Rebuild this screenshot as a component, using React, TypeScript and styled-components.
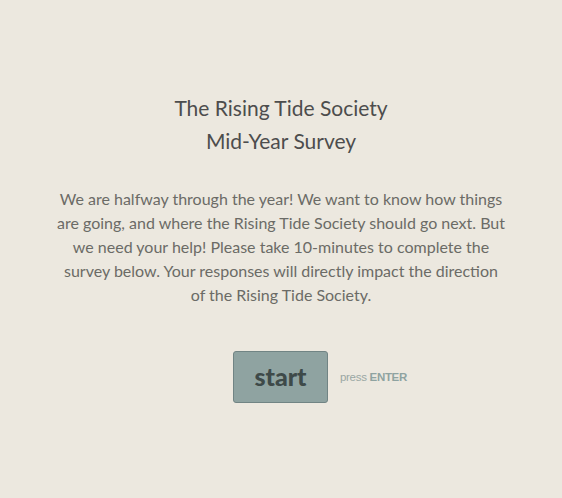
import React from "react";
import styled, { createGlobalStyle } from "styled-components";

const Global = createGlobalStyle`
  html, body { margin: 0; padding: 0; background: #ece8df; }
  body { font-family: Lato, "Open Sans", sans-serif; }
`;

const Page = styled.div`
  width: 562px;
  height: 498px;
  background: #ece8df;
  display: flex;
  flex-direction: column;
  align-items: center;
  padding-top: 91px;
  box-sizing: border-box;
`;

const Title = styled.h1`
  margin: 0;
  font-family: Lato, sans-serif;
  font-weight: 400;
  font-size: 21px;
  line-height: 33px;
  color: #4d4d4d;
  text-align: center;
`;

const Body = styled.p`
  margin: 30px 0 0;
  width: 451px;
  font-family: Lato, sans-serif;
  font-size: 16px;
  line-height: 24px;
  color: #6b6b66;
  text-align: center;
`;

const Actions = styled.div`
  margin-top: 44px;
  display: flex;
  align-items: center;
  gap: 12px;
  margin-left: 78px;
`;

const StartButton = styled.button`
  width: 95px;
  height: 52px;
  background: #8fa3a1;
  border: 1px solid #718484;
  border-radius: 3px;
  font-family: Lato, sans-serif;
  font-weight: 900;
  font-size: 25px;
  color: #3e4a49;
  padding: 0 0 2px;
  cursor: pointer;
`;

const Hint = styled.span`
  font-family: "Liberation Sans", Arial, sans-serif;
  font-size: 11.5px;
  color: #9aa7a4;
  letter-spacing: -0.3px;
  b { font-weight: 700; color: #8fa3a1; }
`;

export default function App() {
  return (
    <Page>
      <Global />
      <Title>
        The Rising Tide Society
        <br />
        Mid-Year Survey
      </Title>
      <Body>
        We are halfway through the year! We want to know how things are going, and where the
        Rising Tide Society should go next. But we need your help! Please take 10-minutes to
        complete the survey below. Your responses will directly impact the direction of the
        Rising Tide Society.
      </Body>
      <Actions>
        <StartButton>start</StartButton>
        <Hint>
          press <b>ENTER</b>
        </Hint>
      </Actions>
    </Page>
  );
}
